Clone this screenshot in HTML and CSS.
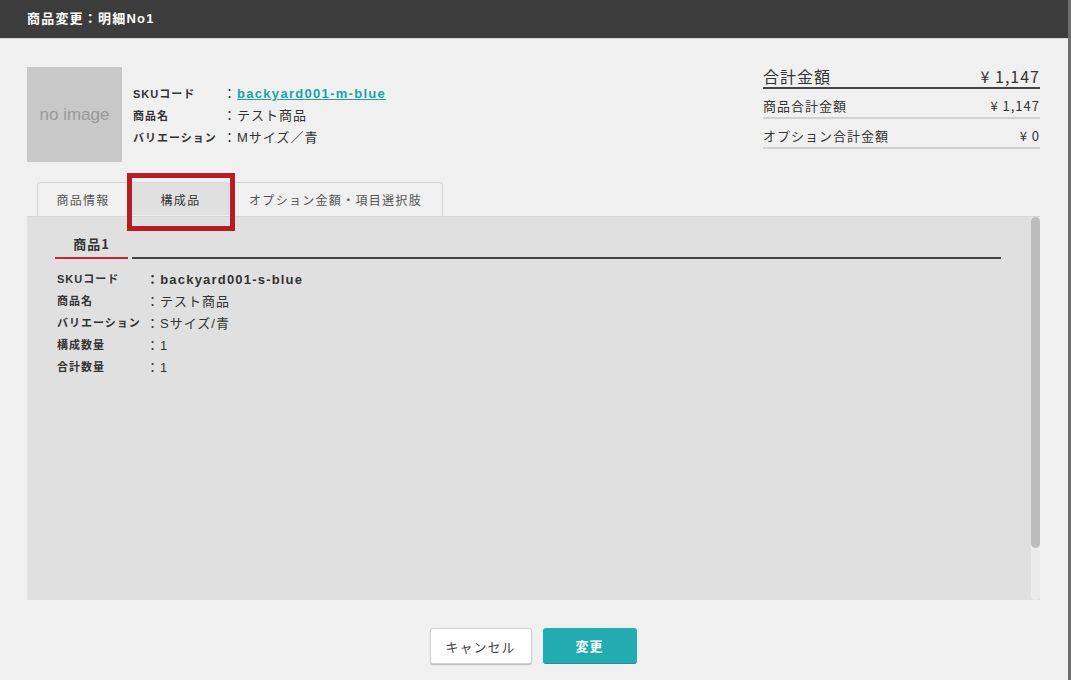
FILE: index.html
```html
<!DOCTYPE html>
<html lang="ja">
  <head>
    <meta charset="UTF-8" />
    <meta name="viewport" content="width=device-width, initial-scale=1.0" />
    <title>商品変更：明細No1</title>
    <link rel="stylesheet" href="styles.css">
  </head>
  <body>
    <div class="modal">
      <div class="modal-head">商品変更：明細No1</div>

      <div class="modal-body">
        <div class="summary">
          <div class="product">
            <div class="noimage">no image</div>
            <table class="info">
              <tr>
                <th>SKUコード</th>
                <td>：<a href="#" class="sku">backyard001-m-blue</a></td>
              </tr>
              <tr>
                <th>商品名</th>
                <td>：テスト商品</td>
              </tr>
              <tr>
                <th>バリエーション</th>
                <td>：Mサイズ／青</td>
              </tr>
            </table>
          </div>

          <div class="totals">
            <div class="total-row main">
              <span>合計金額</span><span>¥ 1,147</span>
            </div>
            <div class="total-row">
              <span>商品合計金額</span><span>¥ 1,147</span>
            </div>
            <div class="total-row">
              <span>オプション合計金額</span><span>¥ 0</span>
            </div>
          </div>
        </div>

        <div class="tabs">
          <div class="tab t1">商品情報</div>
          <div class="tab t2 active">構成品</div>
          <div class="tab t3">オプション金額・項目選択肢</div>
          <!-- 注目枠 -->
          <div class="mark"></div>
        </div>

        <div class="panel">
          <div class="panel-content">
            <div class="subtabs">
              <div class="subtab">商品1</div>
              <div class="subline"></div>
            </div>
            <table class="detail">
              <tr>
                <th>SKUコード</th>
                <td class="code">：backyard001-s-blue</td>
              </tr>
              <tr>
                <th>商品名</th>
                <td>：テスト商品</td>
              </tr>
              <tr>
                <th>バリエーション</th>
                <td>：Sサイズ/青</td>
              </tr>
              <tr>
                <th>構成数量</th>
                <td>：1</td>
              </tr>
              <tr>
                <th>合計数量</th>
                <td>：1</td>
              </tr>
            </table>
          </div>
          <div class="scrollbar">
            <div class="thumb"></div>
          </div>
        </div>
      </div>

      <div class="modal-foot">
        <button type="button" class="btn cancel">キャンセル</button>
        <button type="button" class="btn ok">変更</button>
      </div>
    </div>
  </body>
</html>
```

FILE: styles.css
```css
html, body {
  margin: 0;
  padding: 0;
}
body {
  background-color: #6e6e6e;
  font-family: "Noto Sans CJK JP", "Noto Sans", sans-serif;
  color: #333;
  width: 1071px;
  height: 680px;
  overflow: hidden;
}
.modal {
  width: 1068px;
  height: 680px;
  background-color: #f0f0f0;
}
.modal-head {
  height: 38px;
  line-height: 38px;
  background-color: #3c3c3c;
  border-bottom: 1px solid #d6d6d6;
  color: #fff;
  font-family: "Liberation Sans", "Noto Sans CJK JP", sans-serif;
  font-size: 13px;
  font-weight: bold;
  letter-spacing: 1.2px;
  padding-left: 27px;
}
.modal-body {
  padding: 0 28px 0 27px;
}
.summary {
  display: flex;
  justify-content: space-between;
  align-items: flex-start;
  padding-top: 26px;
}
.product {
  display: flex;
  align-items: center;
  margin-top: 2px;
}
.noimage {
  width: 95px;
  height: 95px;
  line-height: 95px;
  background-color: #c8c8c8;
  color: #999;
  text-align: center;
  font-family: "Liberation Sans", Arial, sans-serif;
  font-size: 17px;
}
.info {
  border-collapse: collapse;
  margin-left: 11px;
  font-family: "Liberation Sans", "Noto Sans CJK JP", sans-serif;
}
.info th {
  width: 90px;
  padding: 0;
  text-align: left;
  font-size: 11px;
  font-weight: bold;
  letter-spacing: 1px;
  height: 22px;
}
.info td {
  padding: 0;
  font-size: 13px;
  letter-spacing: 1px;
  height: 22px;
}
.sku {
  color: #1aa3a8;
  font-weight: bold;
  letter-spacing: 1.3px;
}

.totals {
  width: 277px;
}
.total-row {
  display: flex;
  justify-content: space-between;
  font-size: 13px;
  line-height: 18px;
  letter-spacing: 1px;
  padding: 8px 0 2px;
  border-bottom: 2px solid #d2d2d2;
}
.total-row.main {
  font-size: 16px;
  line-height: 22px;
  padding: 0;
  border-bottom: 2px solid #444;
}

.tabs {
  position: relative;
  display: flex;
  margin-top: 20px;
  padding-left: 10px;
}
.tab {
  height: 33px;
  line-height: 34px;
  text-align: center;
  font-size: 12px;
  letter-spacing: 1.3px;
  color: #555;
  background-color: #f0f0f0;
  border: 1px solid #d4d4d4;
  border-bottom: none;
  border-radius: 3px 3px 0 0;
}
.t1 {
  width: 90px;
}
.t2 {
  width: 100px;
  padding-left: 4px;
  box-sizing: border-box;
  border-left: none;
}
.t3 {
  width: 213px;
  border-left: none;
}
.tab.active {
  background-color: #e0e0e0;
  color: #333;
}
.mark {
  position: absolute;
  left: 100px;
  top: -9px;
  width: 98px;
  height: 48px;
  border: 5px solid #b81c22;
}

.panel {
  display: flex;
  height: 383px;
  background-color: #e0e0e0;
  border-top: 1px solid #d6d6d6;
}
.panel-content {
  flex: 1;
  padding: 0 30px 0 28px;
}
.subtabs {
  display: flex;
  align-items: flex-end;
}
.subtab {
  width: 73px;
  padding: 18px 0 4px;
  line-height: 18px;
  text-align: center;
  font-size: 13px;
  font-weight: bold;
  letter-spacing: 1px;
  border-bottom: 2px solid #c8262c;
}
.subline {
  flex: 1;
  margin-left: 4px;
  border-bottom: 2px solid #444;
}
.detail {
  border-collapse: collapse;
  margin-top: 8px;
  margin-left: 2px;
  font-family: "Liberation Sans", "Noto Sans CJK JP", sans-serif;
}
.detail th {
  width: 89px;
  padding: 0;
  height: 22px;
  text-align: left;
  font-size: 11px;
  font-weight: bold;
  letter-spacing: 1px;
}
.detail td {
  padding: 0;
  height: 22px;
  font-size: 13px;
  letter-spacing: 1px;
}
.detail td.code {
  font-weight: bold;
  letter-spacing: 1.2px;
}
.scrollbar {
  width: 9px;
  background-color: #ececec;
  border-radius: 0 0 5px 5px;
}
.thumb {
  height: 331px;
  background-color: #bcbcbc;
  border-radius: 5px;
}

.modal-foot {
  display: flex;
  justify-content: center;
  gap: 11px;
  padding-top: 28px;
  padding-right: 2px;
}
.btn {
  height: 36px;
  font-family: "Noto Sans CJK JP", sans-serif;
  font-size: 13px;
  letter-spacing: 1px;
  border-radius: 3px;
  cursor: pointer;
}
.cancel {
  width: 102px;
  background-color: #fff;
  color: #444;
  border: 1px solid #d0d0d0;
  box-shadow: 0 1px 1px #b8b8b8;
}
.ok {
  width: 94px;
  background-color: #22abb0;
  color: #fff;
  font-weight: bold;
  border: none;
  border-bottom: 1px solid #1c9599;
}
```
